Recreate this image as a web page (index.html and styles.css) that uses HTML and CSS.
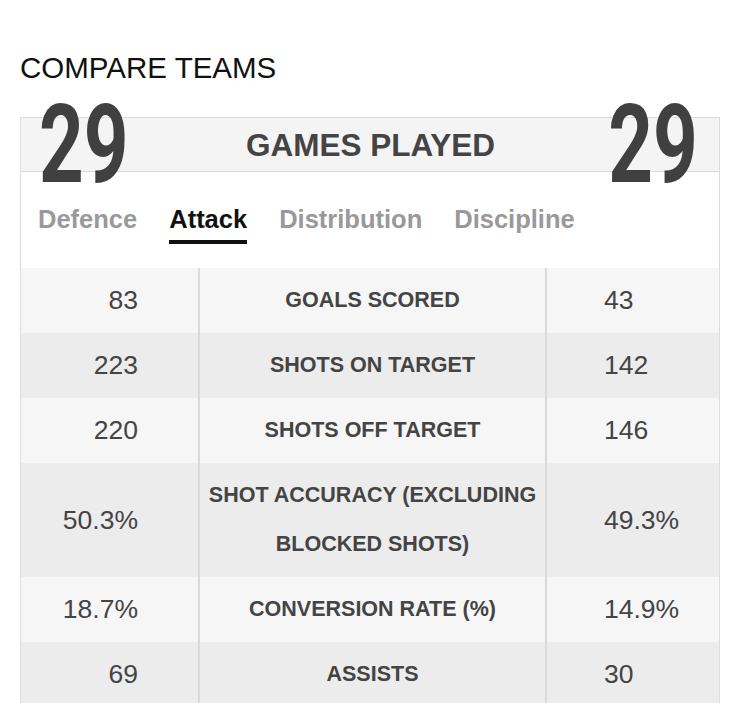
FILE: index.html
```html
<!DOCTYPE html>
<html>
<head>
<meta charset="utf-8">
<link rel="stylesheet" href="styles.css">
</head>
<body>
<h1 class="title">COMPARE TEAMS</h1>
<div class="card">
  <div class="head">
    <span class="big big-left">29</span>
    <span class="head-label">GAMES PLAYED</span>
    <span class="big big-right">29</span>
  </div>
  <div class="tabs">
    <span class="tab">Defence</span>
    <span class="tab active">Attack</span>
    <span class="tab">Distribution</span>
    <span class="tab">Discipline</span>
  </div>
  <div class="rows">
    <div class="row light"><div class="v l">83</div><div class="lab">GOALS SCORED</div><div class="v r">43</div></div>
    <div class="row dark"><div class="v l">223</div><div class="lab">SHOTS ON TARGET</div><div class="v r">142</div></div>
    <div class="row light"><div class="v l">220</div><div class="lab">SHOTS OFF TARGET</div><div class="v r">146</div></div>
    <div class="row dark"><div class="v l">50.3%</div><div class="lab">SHOT ACCURACY (EXCLUDING BLOCKED SHOTS)</div><div class="v r">49.3%</div></div>
    <div class="row light"><div class="v l">18.7%</div><div class="lab">CONVERSION RATE (%)</div><div class="v r">14.9%</div></div>
    <div class="row dark"><div class="v l">69</div><div class="lab">ASSISTS</div><div class="v r">30</div></div>
  </div>
</div>
</body>
</html>
```
FILE: styles.css
```css
* { box-sizing: border-box; }
body {
  margin: 0;
  background: #fff;
  font-family: "Liberation Sans", Arial, sans-serif;
  overflow: hidden;
}
.title {
  margin: 51px 0 0 20px;
  font-size: 29.5px;
  font-weight: normal;
  line-height: 33px;
  color: #111;
}
.card {
  position: relative;
  margin: 33px 0 0 20px;
  width: 700px;
  border: 1px solid #dcdcdc;
  border-bottom: none;
  background: #fff;
}
.head {
  height: 54px;
  background: #f4f4f4;
  border-bottom: 1px solid #d9d9d9;
  display: flex;
  justify-content: center;
  align-items: center;
}
.head-label {
  font-size: 31.5px;
  font-weight: bold;
  color: #444;
  line-height: 50px;
  margin-left: 1px;
}
.big {
  position: absolute;
  top: -14px;
  font-family: Roboto, "Liberation Sans", sans-serif;
  font-weight: 700;
  font-size: 80px;
  line-height: 60px;
  color: #404040;
  transform: scale(0.976, 1.375);
}
.big-left { left: 18px; transform-origin: left top; }
.big-right { right: 21px; transform-origin: right top; }
.tabs {
  display: flex;
  gap: 32px;
  padding-left: 17px;
  margin-top: 33px;
  margin-bottom: 24px;
}
.tab {
  font-size: 25.5px;
  font-weight: bold;
  line-height: 29px;
  color: #999;
  padding-bottom: 6px;
  border-bottom: 4px solid transparent;
}
.tab.active {
  color: #111;
  border-bottom-color: #111;
}
.row {
  display: grid;
  grid-template-columns: 177px 349px 1fr;
  align-items: center;
}
.row.light { background: #f6f6f6; }
.row.dark { background: #ececec; }
.row > div {
  align-self: stretch;
  display: flex;
  align-items: center;
  padding: 8px 0;
  line-height: 49px;
}
.v {
  font-size: 26.5px;
  color: #444;
}
.v.l { justify-content: flex-end; padding-right: 60px !important; }
.v.r { padding-left: 57px !important; }
.lab {
  justify-content: center;
  text-align: center;
  font-size: 21.5px;
  font-weight: bold;
  color: #444;
  border-left: 2px solid #dadada;
  border-right: 2px solid #dadada;
  padding-left: 6px !important;
  padding-right: 6px !important;
}
```
